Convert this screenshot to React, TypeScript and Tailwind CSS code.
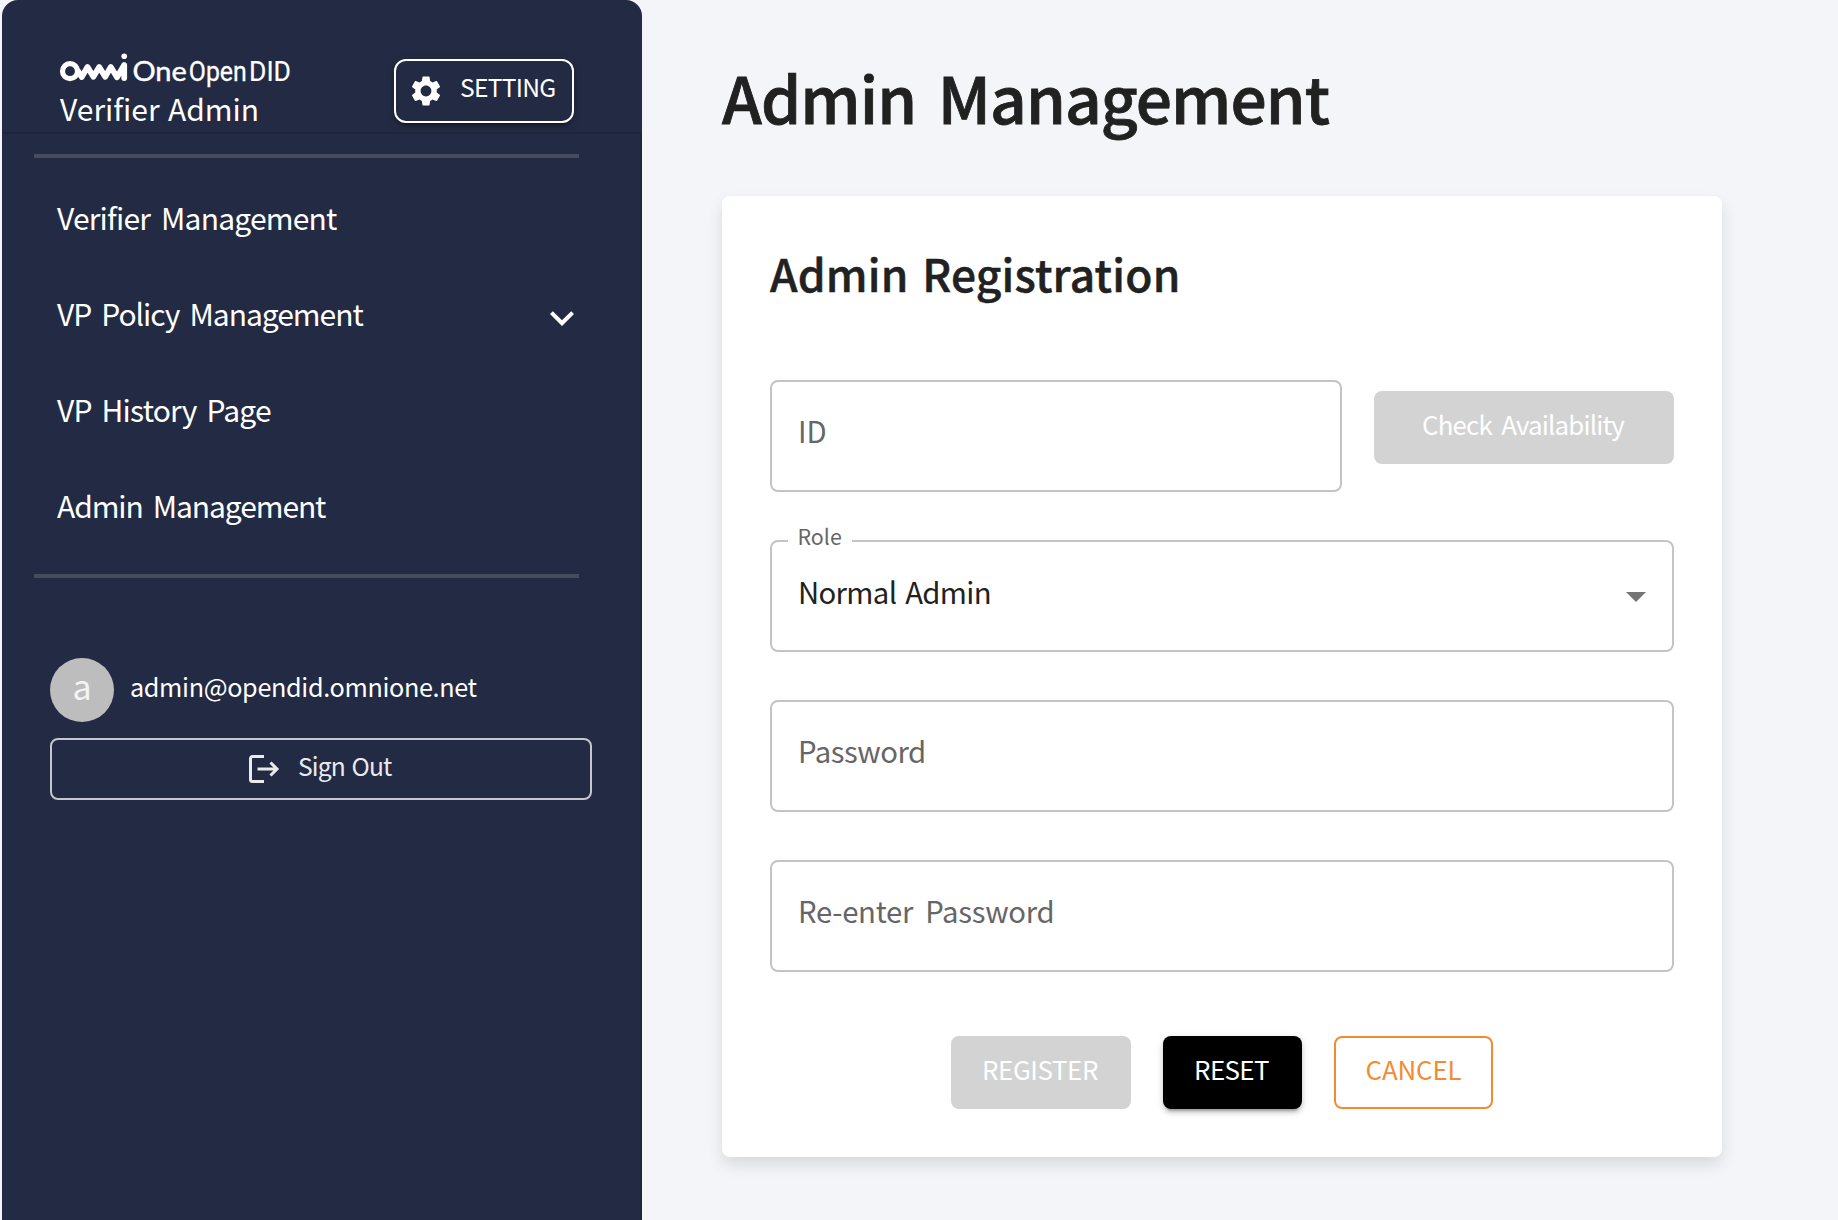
import type { ReactNode } from 'react';

function Logo() {
  return (
    <svg width="236" height="38" viewBox="58 50 236 38" className="-ml-0.5 block" fill="#fff">
      <circle cx="70" cy="70.2" r="7.5" fill="none" stroke="#fff" strokeWidth="5.2" />
      <path
        d="M78 70 L81.7 76 L87.5 66 L93.4 75.8 L99.2 66 L105.2 75.8 L110.8 66 L117 76.2 L124.2 64 V77"
        fill="none"
        stroke="#fff"
        strokeWidth="5.8"
        strokeLinecap="round"
        strokeLinejoin="round"
      />
      <circle cx="124.2" cy="55.3" r="2.8" />
      <text x="132.4" y="79.8" fontFamily="Lato" fontSize="27" fontWeight="400" stroke="#fff" strokeWidth="0.4" textLength="54.5" lengthAdjust="spacingAndGlyphs">One</text>
      <text x="188.8" y="79.8" fontFamily="Roboto" fontSize="27.5" stroke="#fff" strokeWidth="0.3" textLength="58" lengthAdjust="spacingAndGlyphs">Open</text>
      <text x="249" y="79.8" fontFamily="Roboto" fontSize="27.5" stroke="#fff" strokeWidth="0.2" textLength="42" lengthAdjust="spacingAndGlyphs">DID</text>
    </svg>
  );
}

function GearIcon() {
  return (
    <svg viewBox="0 0 24 24" className="size-9 shrink-0" fill="currentColor">
      <path d="M19.14 12.94c.04-.3.06-.61.06-.94 0-.32-.02-.64-.07-.94l2.03-1.58c.18-.14.23-.41.12-.61l-1.92-3.32c-.12-.22-.37-.29-.59-.22l-2.39.96c-.5-.38-1.03-.7-1.62-.94l-.36-2.54c-.04-.24-.24-.41-.48-.41h-3.84c-.24 0-.43.17-.47.41l-.36 2.54c-.59.24-1.13.57-1.62.94l-2.39-.96c-.22-.08-.47 0-.59.22L2.74 8.87c-.12.21-.08.47.12.61l2.03 1.58c-.05.3-.09.63-.09.94s.02.64.07.94l-2.03 1.58c-.18.14-.23.41-.12.61l1.92 3.32c.12.22.37.29.59.22l2.39-.96c.5.38 1.03.7 1.62.94l.36 2.54c.05.24.24.41.48.41h3.84c.24 0 .44-.17.47-.41l.36-2.54c.59-.24 1.13-.56 1.62-.94l2.39.96c.22.08.47 0 .59-.22l1.92-3.32c.12-.22.07-.47-.12-.61l-2.01-1.58zM12 15.6c-1.98 0-3.6-1.62-3.6-3.6s1.62-3.6 3.6-3.6 3.6 1.62 3.6 3.6-1.62 3.6-3.6 3.6z" />
    </svg>
  );
}

function ChevronIcon() {
  return (
    <svg viewBox="0 0 24 24" className="mt-2.5 size-12" fill="currentColor">
      <path d="M7.41 8.59 12 13.17l4.59-4.58L18 10l-6 6-6-6z" />
    </svg>
  );
}

function SignOutIcon() {
  return (
    <svg width="32" height="30" viewBox="0 0 32 30" className="shrink-0" fill="none" stroke="currentColor" strokeWidth="3">
      <path d="M16 2.5H4.5a2 2 0 0 0-2 2v21a2 2 0 0 0 2 2H16" />
      <path d="M9.5 15H29M22.5 8.5l6.5 6.5-6.5 6.5" />
    </svg>
  );
}

function MenuItem({ label, spacing, chevron }: { label: string; spacing: string; chevron?: boolean }) {
  return (
    <li className="flex h-24 items-center justify-between pr-[54px] pl-[55px]">
      <span className={`text-[30px] leading-9 ${spacing}`}>{label}</span>
      {chevron && <ChevronIcon />}
    </li>
  );
}

function Field({ className = '', children }: { className?: string; children: ReactNode }) {
  return (
    <div className={`relative flex h-28 rounded-lg border-2 border-[#c4c4c4] pt-[30px] pl-[26px] ${className}`}>
      {children}
    </div>
  );
}

export default function App() {
  return (
    <div className="flex h-[1220px] w-[1838px] overflow-hidden bg-[#f4f5f8] font-['Noto_Sans_CJK_KR',sans-serif] text-[#212121]">
      <aside className="ml-0.5 w-[640px] shrink-0 overflow-hidden rounded-t-2xl bg-[#232a43] text-white">
        <header className="flex h-[132px] justify-between pr-[68px] pl-[58px]">
          <div className="pt-[51px]">
            <Logo />
            <div className="mt-px text-[30px] leading-9 tracking-[0.02px] [word-spacing:1.5px]">Verifier Admin</div>
          </div>
          <button className="mt-[59px] flex h-16 w-[180px] items-center rounded-xl border-2 border-white pl-3 shadow-[0_6px_2px_-4px_rgba(0,0,0,0.2),0_4px_4px_rgba(0,0,0,0.14),0_2px_10px_rgba(0,0,0,0.12)]">
            <GearIcon />
            <span className="ml-4 pb-[11px] text-[24.6px] leading-8 tracking-[-0.73px]">SETTING</span>
          </button>
        </header>
        <div className="h-[1088px] border-t-2 border-r-2 border-[#1e253b]">
          <div className="mt-5 ml-8 h-1 w-[545px] bg-[#474b5e]" />
          <ul className="mt-[11px]">
            <MenuItem label="Verifier Management" spacing="tracking-[-0.8px] [word-spacing:5px]" />
            <MenuItem label="VP Policy Management" spacing="tracking-[-1.04px] [word-spacing:4.5px]" chevron />
            <MenuItem label="VP History Page" spacing="tracking-[-0.8px] [word-spacing:4px]" />
            <MenuItem label="Admin Management" spacing="tracking-[-1.1px] [word-spacing:4.5px]" />
          </ul>
          <div className="mt-[21px] ml-8 h-1 w-[545px] bg-[#474b5e]" />
          <div className="mt-20 ml-12 flex items-center">
            <div className="flex size-16 items-center justify-center rounded-full bg-[#bdbdbd] pb-2 text-[34px] leading-10 text-[#f4f4f7]">a</div>
            <span className="ml-4 pb-[9px] text-[25.2px] leading-8 tracking-[-0.34px]">admin@opendid.omnione.net</span>
          </div>
          <button className="mt-4 ml-12 flex h-[62px] w-[542px] items-center rounded-lg border-2 border-[#c5c7ce] pl-[196px] text-[#e9eaec]">
            <SignOutIcon />
            <span className="ml-[18px] pb-[9px] text-[24.6px] leading-8 tracking-[-0.85px] [word-spacing:2px]">Sign Out</span>
          </button>
        </div>
      </aside>

      <main className="ml-20 w-[1000px] shrink-0">
        <h1 className="mt-14 h-[140px] text-[64px] leading-20 font-medium tracking-[-0.93px] [word-spacing:8.2px] [-webkit-text-stroke:0.8px_#212121]">Admin Management</h1>
        <section className="h-[961px] rounded-lg bg-white px-12 shadow-[0_8px_16px_rgba(0,0,0,0.11)]">
          <h2 className="h-[184px] pt-[51px] text-[44.3px] leading-[52px] font-medium tracking-[0.19px] [word-spacing:3.4px] [-webkit-text-stroke:0.5px_#212121]">Admin Registration</h2>
          <div className="flex gap-8">
            <Field className="w-[572px]">
              <span className="text-[29.3px] leading-9 text-[#666]">ID</span>
            </Field>
            <button className="mt-[11px] flex h-[73px] w-[300px] items-center justify-center rounded-lg bg-[#d3d3d3] pr-[2px] pb-[7px] text-[25.9px] leading-8 tracking-[-0.85px] [word-spacing:4.5px] text-white">Check Availability</button>
          </div>
          <Field className="mt-12">
            <span className="absolute -top-[22px] left-4 bg-white pr-[10px] pl-[9.5px] text-[21.4px] leading-8 text-[#666]">Role</span>
            <span className="mt-px text-[29.3px] leading-9 tracking-[-0.66px] [word-spacing:3px]">Normal Admin</span>
            <svg width="20" height="10" viewBox="0 0 20 10" className="mt-5 mr-[26px] ml-auto" fill="#757575">
              <path d="M0 0h20L10 10z" />
            </svg>
          </Field>
          <Field className="mt-12">
            <span className="text-[29.3px] leading-9 tracking-[-0.45px] text-[#666]">Password</span>
          </Field>
          <Field className="mt-12">
            <span className="text-[29.3px] leading-9 tracking-[-0.29px] [word-spacing:6px] text-[#666]">Re-enter Password</span>
          </Field>
          <div className="mt-16 flex h-[73px] justify-center gap-8 text-[25.9px] leading-8">
            <button className="w-[180px] rounded-lg bg-[#d3d3d3] pr-[2px] pb-[7px] tracking-[-0.4px] text-white">REGISTER</button>
            <button className="w-[139px] rounded-lg bg-black pr-[2px] pb-[7px] tracking-[-0.6px] text-white shadow-[0_6px_2px_-4px_rgba(0,0,0,0.2),0_4px_4px_rgba(0,0,0,0.14),0_2px_10px_rgba(0,0,0,0.12)]">RESET</button>
            <button className="w-[159px] rounded-lg border-2 border-[#f28c33] pb-[7px] tracking-[-0.15px] text-[#f28c33]">CANCEL</button>
          </div>
        </section>
      </main>
    </div>
  );
}
